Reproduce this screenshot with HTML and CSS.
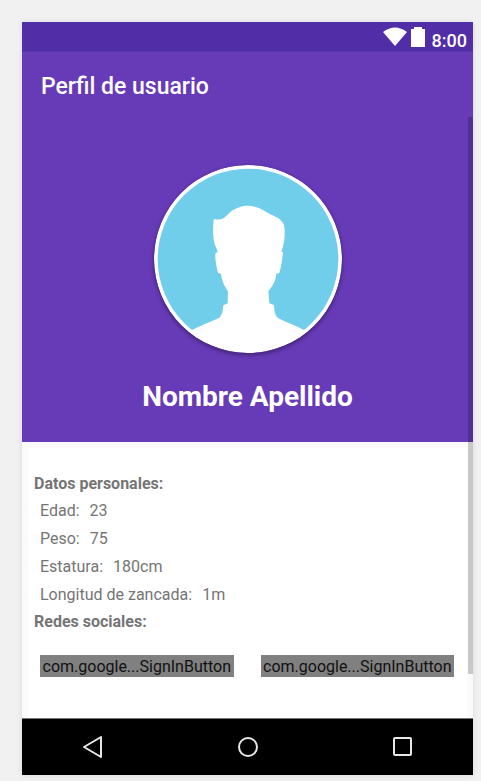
FILE: index.html
```html
<!DOCTYPE html>
<html lang="es">
<head>
<meta charset="utf-8">
<meta name="viewport" content="width=device-width, initial-scale=1">
<title>Perfil de usuario</title>
<link rel="stylesheet" href="styles.css">
</head>
<body>
<div class="phone">
  <div class="status">
    <svg class="wifi" width="24" height="20" viewBox="0 0 24 20" aria-hidden="true"><path d="M0 5Q12-4 24 5L12 19Z"/></svg>
    <svg class="battery" width="14" height="20" viewBox="0 0 14 20" aria-hidden="true"><path d="M3 0h8v2h3v18H0V2h3z"/></svg>
    <span class="clock">8:00</span>
  </div>
  <header class="hero">
    <h1 class="title">Perfil de usuario</h1>
    <svg class="avatar" viewBox="42 30 564 564" role="img" aria-label="Foto de perfil">
      <clipPath id="photo"><circle cx="324" cy="312" r="276"/></clipPath>
      <circle cx="324" cy="312" r="282" fill="#fff"/>
      <circle cx="324" cy="312" r="271" fill="#71ceeb"/>
      <path clip-path="url(#photo)" fill="#fff" d="M323 152C303 152 287 160 275 168C260 179 253 194 237 193Q230 196 227 192L221 194C218 215 219 238 221 253C223 269 229 279 233 290L226 296C225 316 230 338 234 353L243 357C245 368 247 377 251 387L264 410L263 445L250 451C248 468 247 481 237 489C215 499 178 513 155 526L155 600H492V525C469 511 433 500 413 488C404 479 403 467 402 450L388 445L385 409C397 393 407 380 409 356L418 354C423 337 427 315 429 292L424 290C431 273 435 247 434 233C434 217 433 207 424 197C411 184 389 179 374 168C357 158 340 152 323 152Z"/>
    </svg>
    <h2 class="name">Nombre Apellido</h2>
  </header>
  <main class="content">
    <section class="card">
      <h3 class="heading">Datos personales:</h3>
      <dl class="facts">
        <div class="fact"><dt>Edad:</dt><dd>23</dd></div>
        <div class="fact"><dt>Peso:</dt><dd>75</dd></div>
        <div class="fact"><dt>Estatura:</dt><dd>180cm</dd></div>
        <div class="fact"><dt>Longitud de zancada:</dt><dd>1m</dd></div>
      </dl>
      <h3 class="heading">Redes sociales:</h3>
      <div class="social">
        <button class="signin" type="button">com.google...SignInButton</button>
        <button class="signin" type="button">com.google...SignInButton</button>
      </div>
    </section>
  </main>
  <nav class="navbar">
    <button class="key" type="button" aria-label="Atrás"><svg width="24" height="24" viewBox="0 0 24 24"><path d="M20 2v20L3 12Z"/></svg></button>
    <button class="key" type="button" aria-label="Inicio"><svg width="24" height="24" viewBox="0 0 24 24"><circle cx="12" cy="12" r="9"/></svg></button>
    <button class="key" type="button" aria-label="Recientes"><svg width="24" height="24" viewBox="0 0 24 24"><rect x="3" y="3" width="17" height="17" rx="1"/></svg></button>
  </nav>
  <div class="scrollbar"></div>
</div>
</body>
</html>
```
FILE: styles.css
```css
* {
  box-sizing: border-box;
}

body {
  margin: 0;
  padding: 22px 8px 6px 22px;
  background: #f1f1f1;
  font-family: Roboto, "Liberation Sans", sans-serif;
  font-size: 16px;
}

h1, h2, h3, dl, dd {
  margin: 0;
}

.phone {
  position: relative;
  background: #fafafa;
  box-shadow: 0 0 6px rgba(0, 0, 0, 0.1);
}

.status {
  display: flex;
  justify-content: flex-end;
  align-items: center;
  gap: 4px;
  height: 29px;
  padding-right: 6px;
  background: #512da8;
  color: #fff;
  fill: #fff;
}

.clock {
  padding: 8px 0 0 3px;
  font-size: 18px;
  font-weight: 500;
  line-height: 21px;
}

.hero {
  display: flex;
  flex-direction: column;
  align-items: center;
  padding-bottom: 27px;
  background: #673ab7;
  border-top: 1px solid #5d34b0;
  color: #fff;
}

.title {
  align-self: stretch;
  padding: 0 19px;
  font-size: 23px;
  font-weight: 500;
  line-height: 70px;
}

.avatar {
  width: 188px;
  height: 188px;
  margin: 43px 0 26px;
  border-radius: 50%;
  box-shadow: 0 2px 4px rgba(0, 0, 0, 0.4);
}

.name {
  font-size: 28px;
  font-weight: 700;
  line-height: 36px;
}

.content {
  padding: 6px 6px 0;
}

.card {
  padding: 23px 6px 41px;
  background: #fff;
  color: #757575;
}

.heading {
  font-size: 16px;
  font-weight: 700;
  line-height: 26px;
}

.facts {
  padding-left: 6px;
}

.fact {
  display: flex;
  gap: 10px;
  line-height: 28px;
}

.social {
  display: flex;
  gap: 27px;
  padding: 20px 7px 0 6px;
}

.signin {
  flex: 1;
  padding: 2px 0 0;
  border: 0;
  background: #808080;
  color: #111;
  font: 16px/20px Roboto, "Liberation Sans", sans-serif;
}

.navbar {
  display: flex;
  justify-content: center;
  gap: 131px;
  padding: 16px 0;
  background: #000;
  border-top: 1px solid #777;
}

.key {
  display: flex;
  padding: 0;
  border: 0;
  background: none;
}

.key svg {
  fill: none;
  stroke: #e8e8e8;
  stroke-width: 2;
  stroke-linejoin: round;
}

.scrollbar {
  position: absolute;
  top: 95px;
  right: 0;
  bottom: 101px;
  width: 5px;
  background: rgba(0, 0, 0, 0.2);
}
```
